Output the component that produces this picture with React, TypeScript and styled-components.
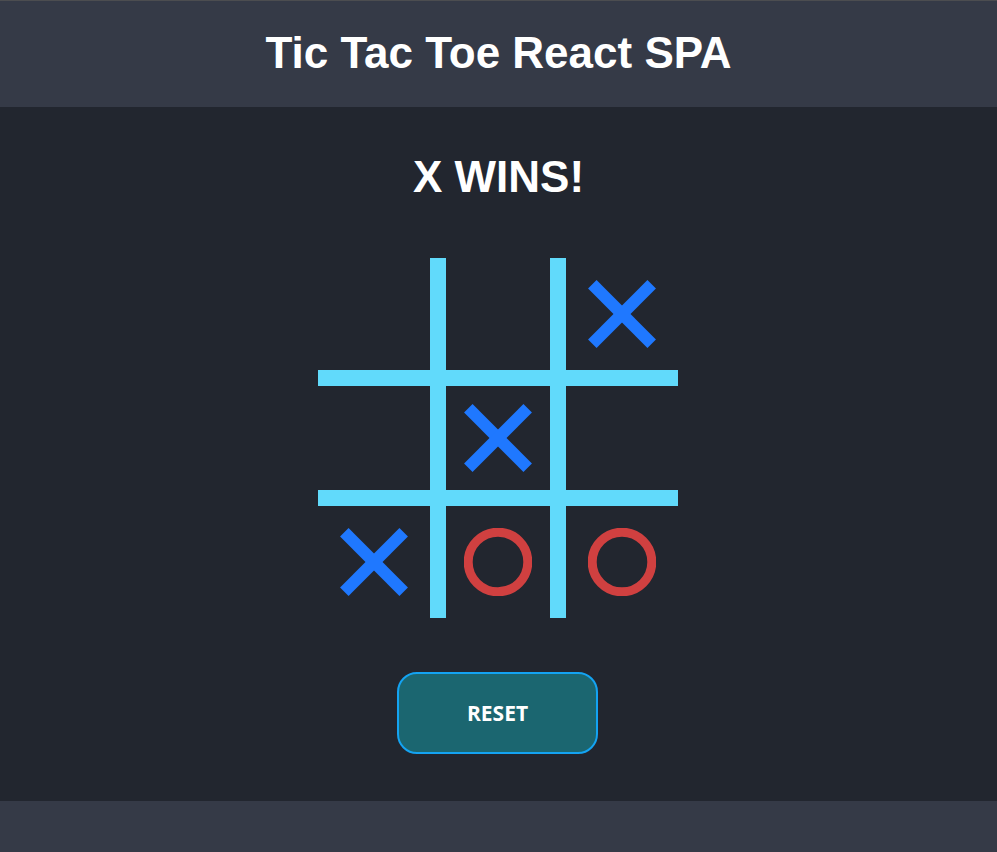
import React, { useState } from "react";
import styled, { createGlobalStyle } from "styled-components";

const GlobalStyle = createGlobalStyle`
  html, body {
    margin: 0;
    padding: 0;
    background: #22262f;
  }
  * { box-sizing: border-box; }
`;

const Page = styled.div`
  display: flex;
  flex-direction: column;
  min-height: 852px;
  background: #22262f;
  font-family: "Liberation Sans", Arial, sans-serif;
`;

const Header = styled.header`
  background: #353a47;
  border-top: 1px solid #4c4d50;
  height: 107px;
  display: flex;
  align-items: flex-start;
  justify-content: center;
  padding-top: 27px;
`;

const HeaderTitle = styled.h1`
  margin: 0;
  color: #ffffff;
  font-size: 44px;
  font-weight: 700;
  line-height: 49px;
`;

const Main = styled.main`
  flex: 1;
  display: flex;
  flex-direction: column;
  align-items: center;
  padding-top: 45px;
  padding-bottom: 47px;
`;

const Status = styled.h2`
  margin: 0;
  color: #ffffff;
  font-size: 44px;
  font-weight: 700;
  line-height: 49px;
`;

const Board = styled.div`
  margin-top: 57px;
  display: grid;
  grid-template-columns: repeat(3, 120px);
  grid-template-rows: repeat(3, 120px);
  margin-right: 1px;
`;

const Cell = styled.div<{ $row: number; $col: number }>`
  display: flex;
  align-items: center;
  justify-content: center;
  border-color: #61dafb;
  border-style: solid;
  border-width: ${(p) => (p.$row > 0 ? 8 : 0)}px ${(p) => (p.$col < 2 ? 8 : 0)}px
    ${(p) => (p.$row < 2 ? 8 : 0)}px ${(p) => (p.$col > 0 ? 8 : 0)}px;
  cursor: pointer;
`;

const ResetButton = styled.button`
  margin-top: 54px;
  margin-right: 2px;
  width: 201px;
  height: 82px;
  border: 2px solid #14a3f2;
  border-radius: 20px;
  background: #1b6670;
  color: #ffffff;
  font-family: "Open Sans", "Noto Sans", sans-serif;
  font-weight: 700;
  font-size: 21px;
  cursor: pointer;
`;

const Footer = styled.footer`
  background: #353a47;
  height: 51px;
`;

const XMark = () => (
  <svg width="68" height="68" viewBox="0 0 68 68">
    <g stroke="#1f78ff" strokeWidth="12" strokeLinecap="butt">
      <line x1="4.3" y1="4.3" x2="63.7" y2="63.7" />
      <line x1="63.7" y1="4.3" x2="4.3" y2="63.7" />
    </g>
  </svg>
);

const OMark = () => (
  <svg width="68" height="68" viewBox="0 0 68 68">
    <circle cx="34" cy="34" r="29.8" fill="none" stroke="#d04040" strokeWidth="9" />
  </svg>
);

const initial: (string | null)[] = [null, null, "X", null, "X", null, "X", "O", "O"];

export default function App() {
  const [cells, setCells] = useState<(string | null)[]>(initial);
  return (
    <>
      <GlobalStyle />
      <Page>
        <Header>
          <HeaderTitle>Tic Tac Toe React SPA</HeaderTitle>
        </Header>
        <Main>
          <Status>X WINS!</Status>
          <Board>
            {cells.map((v, i) => (
              <Cell key={i} $row={Math.floor(i / 3)} $col={i % 3}>
                {v === "X" ? <XMark /> : v === "O" ? <OMark /> : null}
              </Cell>
            ))}
          </Board>
          <ResetButton onClick={() => setCells(Array(9).fill(null))}>RESET</ResetButton>
        </Main>
        <Footer />
      </Page>
    </>
  );
}
